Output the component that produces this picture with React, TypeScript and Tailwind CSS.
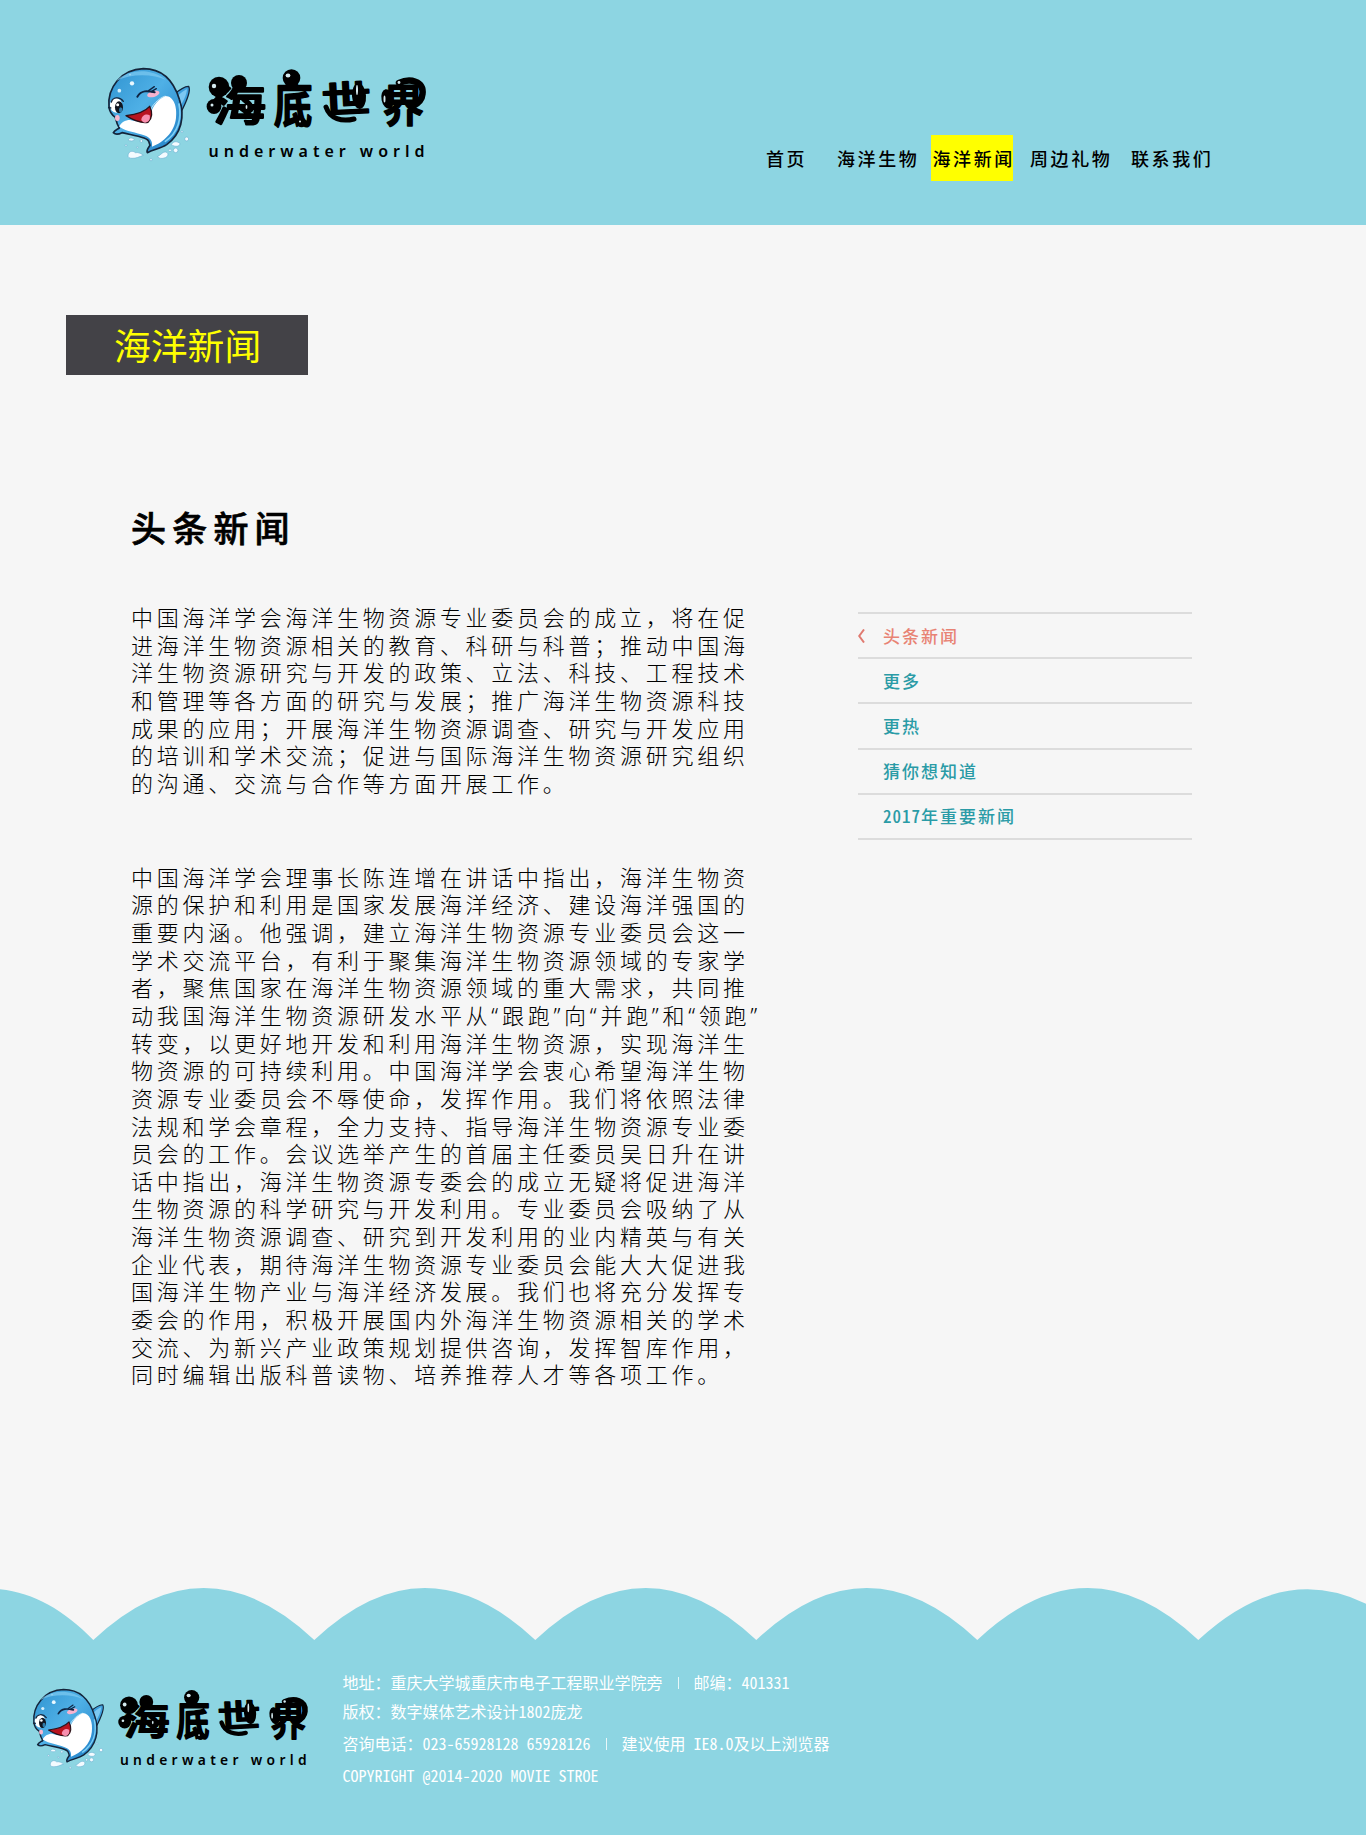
import React from "react";

const NAV = [
  { label: "首页", box: "w-[41px]", gap: "mr-[30px]", active: false },
  { label: "海洋生物", box: "w-[83px]", gap: "mr-[11px]", active: false },
  { label: "海洋新闻", box: "w-[82px]", gap: "mr-[17px]", active: true },
  { label: "周边礼物", box: "w-[83px]", gap: "mr-[18px]", active: false },
  { label: "联系我们", box: "w-[83px]", gap: "", active: false },
];

const PARAGRAPH_ONE = [
  "中国海洋学会海洋生物资源专业委员会的成立，将在促",
  "进海洋生物资源相关的教育、科研与科普；推动中国海",
  "洋生物资源研究与开发的政策、立法、科技、工程技术",
  "和管理等各方面的研究与发展；推广海洋生物资源科技",
  "成果的应用；开展海洋生物资源调查、研究与开发应用",
  "的培训和学术交流；促进与国际海洋生物资源研究组织",
  "的沟通、交流与合作等方面开展工作。",
];

const PARAGRAPH_TWO = [
  "中国海洋学会理事长陈连增在讲话中指出，海洋生物资",
  "源的保护和利用是国家发展海洋经济、建设海洋强国的",
  "重要内涵。他强调，建立海洋生物资源专业委员会这一",
  "学术交流平台，有利于聚集海洋生物资源领域的专家学",
  "者，聚焦国家在海洋生物资源领域的重大需求，共同推",
  "动我国海洋生物资源研发水平从“跟跑”向“并跑”和“领跑”",
  "转变，以更好地开发和利用海洋生物资源，实现海洋生",
  "物资源的可持续利用。中国海洋学会衷心希望海洋生物",
  "资源专业委员会不辱使命，发挥作用。我们将依照法律",
  "法规和学会章程，全力支持、指导海洋生物资源专业委",
  "员会的工作。会议选举产生的首届主任委员吴日升在讲",
  "话中指出，海洋生物资源专委会的成立无疑将促进海洋",
  "生物资源的科学研究与开发利用。专业委员会吸纳了从",
  "海洋生物资源调查、研究到开发利用的业内精英与有关",
  "企业代表，期待海洋生物资源专业委员会能大大促进我",
  "国海洋生物产业与海洋经济发展。我们也将充分发挥专",
  "委会的作用，积极开展国内外海洋生物资源相关的学术",
  "交流、为新兴产业政策规划提供咨询，发挥智库作用，",
  "同时编辑出版科普读物、培养推荐人才等各项工作。",
];

const SIDE_LINKS = ["头条新闻", "更多", "更热", "猜你想知道", "2017年重要新闻"];

function Whale({ id }: { id: string }) {
  return (
    <g transform="translate(-8 -8) scale(0.3333)">
      <defs>
        <linearGradient id={id} x1="0" y1="0" x2="1" y2="1">
          <stop offset="0" stopColor="#2f93d0" />
          <stop offset="0.45" stopColor="#4fb0e6" />
          <stop offset="1" stopColor="#1d7cc4" />
        </linearGradient>
      </defs>
      {/* right fin */}
      <path d="M216 108 C228 98 250 78 266 79 C274 92 258 128 240 162 Z" fill="#3d9fdc" stroke="#14243a" strokeWidth="4" strokeLinejoin="round" />
      <path d="M228 112 C240 100 254 90 261 88 C260 104 250 124 240 140 Z" fill="#7cc8f2" />
      {/* body */}
      <path
        d="M27 140 C22 85 62 28 130 26 C190 26 222 66 238 118 C256 170 244 222 200 254 C182 266 160 268 142 278 C138 270 146 262 150 256 C146 244 148 240 132 234 C110 226 90 224 66 218 C54 224 46 224 40 218 C44 210 52 208 58 204 C50 192 48 180 46 172 C34 164 28 152 27 140 Z"
        fill={`url(#${id})`}
        stroke="#14243a"
        strokeWidth="5"
        strokeLinejoin="round"
      />
      <path d="M50 62 C80 30 150 20 198 60 C160 42 96 40 50 62 Z" fill="#7fcaf1" opacity="0.7" />
      <path d="M237 132 C246 176 234 218 196 244" fill="none" stroke="#7fd0f5" strokeWidth="5" strokeLinecap="round" />
      {/* belly */}
      <path
        d="M58 200 C62 188 76 180 90 180 C112 186 136 190 150 178 C150 150 168 120 196 108 C222 108 232 142 228 174 C224 216 190 248 156 260 C158 242 150 232 132 226 C108 216 82 216 58 200 Z"
        fill="#fff"
      />
      <path d="M196 108 C176 114 152 138 150 158" fill="none" stroke="#b9e2f5" strokeWidth="3" />
      {/* mouth */}
      <path d="M78 167 C104 164 134 156 149 139 C158 158 156 176 144 187 C122 190 98 180 78 167 Z" fill="#b81420" stroke="#2a1018" strokeWidth="4" strokeLinejoin="round" />
      <path d="M124 180 C124 166 140 160 149 166 C152 178 146 187 136 188 C130 188 126 184 124 180 Z" fill="#f78fae" />
      {/* open eye */}
      <ellipse cx="48" cy="136" rx="18" ry="22" fill="#fff" />
      <path d="M34 126 C38 112 58 108 70 124" fill="none" stroke="#14243a" strokeWidth="4" strokeLinecap="round" />
      <ellipse cx="57" cy="142" rx="12" ry="18" fill="#10151f" />
      <ellipse cx="62" cy="150" rx="5" ry="8" fill="#2e7aa8" />
      <circle cx="53" cy="134" r="4.5" fill="#fff" />
      <path d="M24 143 L34 144" stroke="#14243a" strokeWidth="4" />
      <ellipse cx="52" cy="174" rx="7" ry="9" fill="#f7b8cf" />
      {/* wink */}
      <ellipse cx="160" cy="102" rx="19" ry="9" fill="#f7b3cf" transform="rotate(-16 160 102)" />
      <path d="M112 110 C124 90 142 92 164 97" fill="none" stroke="#0f2443" strokeWidth="6" strokeLinecap="round" />
      <path d="M146 92 L163 80 M154 95 L169 86" stroke="#0f2443" strokeWidth="4" strokeLinecap="round" />
      {/* speckles */}
      <circle cx="96" cy="70" r="6.5" fill="#eaf8ff" />
      <circle cx="58" cy="92" r="5.5" fill="#d6f0fc" />
      <circle cx="90" cy="44" r="2.5" fill="#a8dcf6" />
      {/* water drops */}
      <g fill="#f4fbff" stroke="#6fb3d3" strokeWidth="2">
        <path d="M84 288 C84 274 98 270 106 278 C116 276 126 282 130 286 C118 290 108 296 96 295 C88 295 84 292 84 288 Z" />
        <path d="M172 290 C182 286 188 274 198 276 C208 280 204 290 196 293 C186 297 178 296 172 290 Z" />
        <path d="M214 254 C220 242 232 244 240 250 C240 260 226 262 214 254 Z" />
        <path d="M84 240 C90 230 100 234 104 240 C98 244 90 244 84 240 Z" />
        <circle cx="260" cy="237" r="6" />
        <circle cx="227" cy="271" r="7" />
        <circle cx="210" cy="271" r="4" />
        <circle cx="78" cy="256" r="3" />
        <circle cx="124" cy="243" r="4" />
        <circle cx="246" cy="215" r="3" />
        <circle cx="153" cy="299" r="3.5" />
        <circle cx="112" cy="262" r="2.5" />
      </g>
    </g>
  );
}

function Logo({ id, className }: { id: string; className: string }) {
  return (
    <svg className={`overflow-visible ${className}`} viewBox="0 0 318 93" preserveAspectRatio="none" role="img" aria-label="海底世界 underwater world">
      <Whale id={id} />
      <g
        fill="#000"
        stroke="#000"
        strokeWidth="2.2"
        strokeLinejoin="round"
        fontFamily="'Noto Sans CJK SC', sans-serif"
        fontWeight="500"
        fontSize="44"
      >
        <text transform="translate(105 52.5) scale(1.2 1)">海</text>
        <text transform="translate(166 54) scale(0.87 1.08)">底</text>
        <text transform="translate(214.5 46) rotate(-3) scale(1.12 0.84)">世</text>
        <text transform="translate(275 54) scale(0.92 1)">界</text>
      </g>
      {/* ink bubbles on the lettering */}
      <circle cx="111" cy="19" r="10.3" />
      <circle cx="106" cy="38.5" r="7.4" />
      <circle cx="131" cy="15" r="8" />
      <circle cx="183.5" cy="10" r="8.8" />
      <circle cx="193.5" cy="54.5" r="4.8" />
      <circle cx="141" cy="40" r="5" />
      <ellipse cx="251" cy="28" rx="7" ry="13" transform="rotate(-4 251 28)" />
      <path d="M218 39 C222 51 234 54 246 51" fill="none" stroke="#000" strokeWidth="5" strokeLinecap="round" />
      <ellipse cx="279.5" cy="31" rx="6" ry="10" transform="rotate(-12 279.5 31)" />
      <path d="M291 15 C302 10 316 13 314.5 26 C314 32 309 36 305 38" fill="none" stroke="#000" strokeWidth="6.5" strokeLinecap="round" />
      <g fill="#d4e9ee">
        <circle cx="106" cy="18" r="2.2" />
        <circle cx="104" cy="37" r="1.5" />
        <ellipse cx="180" cy="7.5" rx="2.4" ry="2" />
        <ellipse cx="249" cy="22" rx="1" ry="5" />
        <circle cx="291" cy="14.5" r="1.4" />
        <ellipse cx="276.5" cy="31" rx="1" ry="3.5" />
        <ellipse cx="138.5" cy="39" rx="0.9" ry="2" />
        <circle cx="192" cy="53.5" r="1" />
      </g>
      <text
        x="100.5"
        y="88.8"
        fontFamily="'Noto Sans', 'Liberation Sans', sans-serif"
        fontWeight="600"
        fontSize="16"
        textLength="216"
        lengthAdjust="spacing"
      >
        underwater world
      </text>
    </svg>
  );
}

function Waves() {
  return (
    <svg className="block h-[53px] w-full shrink-0" viewBox="0 0 1366 53" preserveAspectRatio="none" aria-hidden="true">
      <path
        fill="#8dd5e2"
        d="M0 1.3 C34 5 64 22 93.3 52 Q203.8 -52 314.3 52 Q424.8 -52 535.3 52 Q645.8 -52 756.3 52 Q866.8 -52 977.3 52 Q1087.8 -52 1198.3 52 Q1307.5 -49.4 1416.7 52 V53 H0 Z"
      />
    </svg>
  );
}

function Lines({ lines }: { lines: string[] }) {
  return (
    <p className="font-['Noto_Sans','Noto_Sans_CJK_SC',sans-serif] text-[22px] leading-[27.65px] font-light tracking-[3.74px] whitespace-nowrap text-black">
      {lines.map((line) => (
        <span key={line} className="block">
          {line}
        </span>
      ))}
    </p>
  );
}

function Divider() {
  return (
    <span className="mx-[7.5px] inline-flex h-[12px] w-[16px] justify-center">
      <span className="h-[12px] w-px bg-white/80" />
    </span>
  );
}

export default function App() {
  return (
    <div className="flex h-[1835px] w-[1366px] flex-col overflow-hidden bg-[#f6f6f6] font-['Noto_Sans_CJK_SC',sans-serif]">
      <header className="flex h-[225px] shrink-0 items-start bg-[#8dd5e2] pl-[108px]">
        <Logo id="whale-top" className="mt-[68px] h-[93px] w-[318px] shrink-0" />
        <nav className="mt-[135px] ml-[340px] flex">
          {NAV.map((item) => (
            <a
              key={item.label}
              href="#"
              className={`h-[46px] text-[18px] leading-[46px] font-medium tracking-[2.6px] whitespace-nowrap text-black ${item.box} ${item.gap} ${
                item.active ? "bg-[#ffff00] pl-[1.5px]" : ""
              }`}
            >
              {item.label}
            </a>
          ))}
        </nav>
      </header>

      <main className="h-[1363px] shrink-0 pt-[90px]">
        <h1 className="ml-[66px] h-[60px] w-[242px] bg-[#434247] pl-[48px] text-[36.8px] leading-[58px] font-normal text-[#ffff00]">
          海洋新闻
        </h1>
        <div className="mt-[119px] flex pl-[131px]">
          <article className="w-[727px] shrink-0">
            <h2 className="h-[66px] text-[35px] leading-[66px] font-medium tracking-[6.2px] text-black [-webkit-text-stroke:0.7px_black]">
              头条新闻
            </h2>
            <div className="mt-[44px]">
              <Lines lines={PARAGRAPH_ONE} />
            </div>
            <div className="mt-[66px]">
              <Lines lines={PARAGRAPH_TWO} />
            </div>
          </article>
          <ul className="mt-[118px] w-[334px] self-start border-t-2 border-[#dcdcdc]">
            {SIDE_LINKS.map((link, i) => (
              <li key={link} className="flex h-[45.2px] items-center border-b-2 border-[#dcdcdc]">
                <span className="w-[25px]">
                  {i === 0 && (
                    <svg className="h-[14px] w-[7px]" viewBox="0 0 7 14" fill="none" aria-hidden="true">
                      <path d="M6 0.5 L1.2 7 L6 13.5" stroke="#e07a70" strokeWidth="2" />
                    </svg>
                  )}
                </span>
                <a
                  href="#"
                  className={`-mt-px text-[17px] leading-none font-medium whitespace-nowrap ${i === 0 ? "text-[#e88374]" : "text-[#2a9ba6]"}`}
                >
                  {link.startsWith("2017") ? (
                    <>
                      <span className="tracking-[1px] [font-feature-settings:'hwid']">{link.slice(0, 4)}</span>
                      <span className="tracking-[2px]">{link.slice(4)}</span>
                    </>
                  ) : (
                    <span className="tracking-[2px]">{link}</span>
                  )}
                </a>
              </li>
            ))}
          </ul>
        </div>
      </main>

      <footer className="flex flex-1 flex-col">
        <Waves />
        <div className="-mt-px flex flex-1 items-start bg-[#8dd5e2] pl-[33px]">
          <Logo id="whale-bottom" className="mt-[49px] h-[80px] w-[275px] shrink-0" />
          <div className="mt-[26px] ml-[34.5px] text-[16px] leading-[32px] whitespace-pre text-white [font-feature-settings:'hwid']">
            <p className="h-[29px]">地址：重庆大学城重庆市电子工程职业学院旁<Divider />邮编：401331</p>
            <p className="h-[32px]">版权：数字媒体艺术设计1802庞龙</p>
            <p className="h-[32px]">咨询电话：023-65928128 65928126<Divider />建议使用 IE8.0及以上浏览器</p>
            <p className="h-[32px]">COPYRIGHT @2014-2020 MOVIE STROE</p>
          </div>
        </div>
      </footer>
    </div>
  );
}
